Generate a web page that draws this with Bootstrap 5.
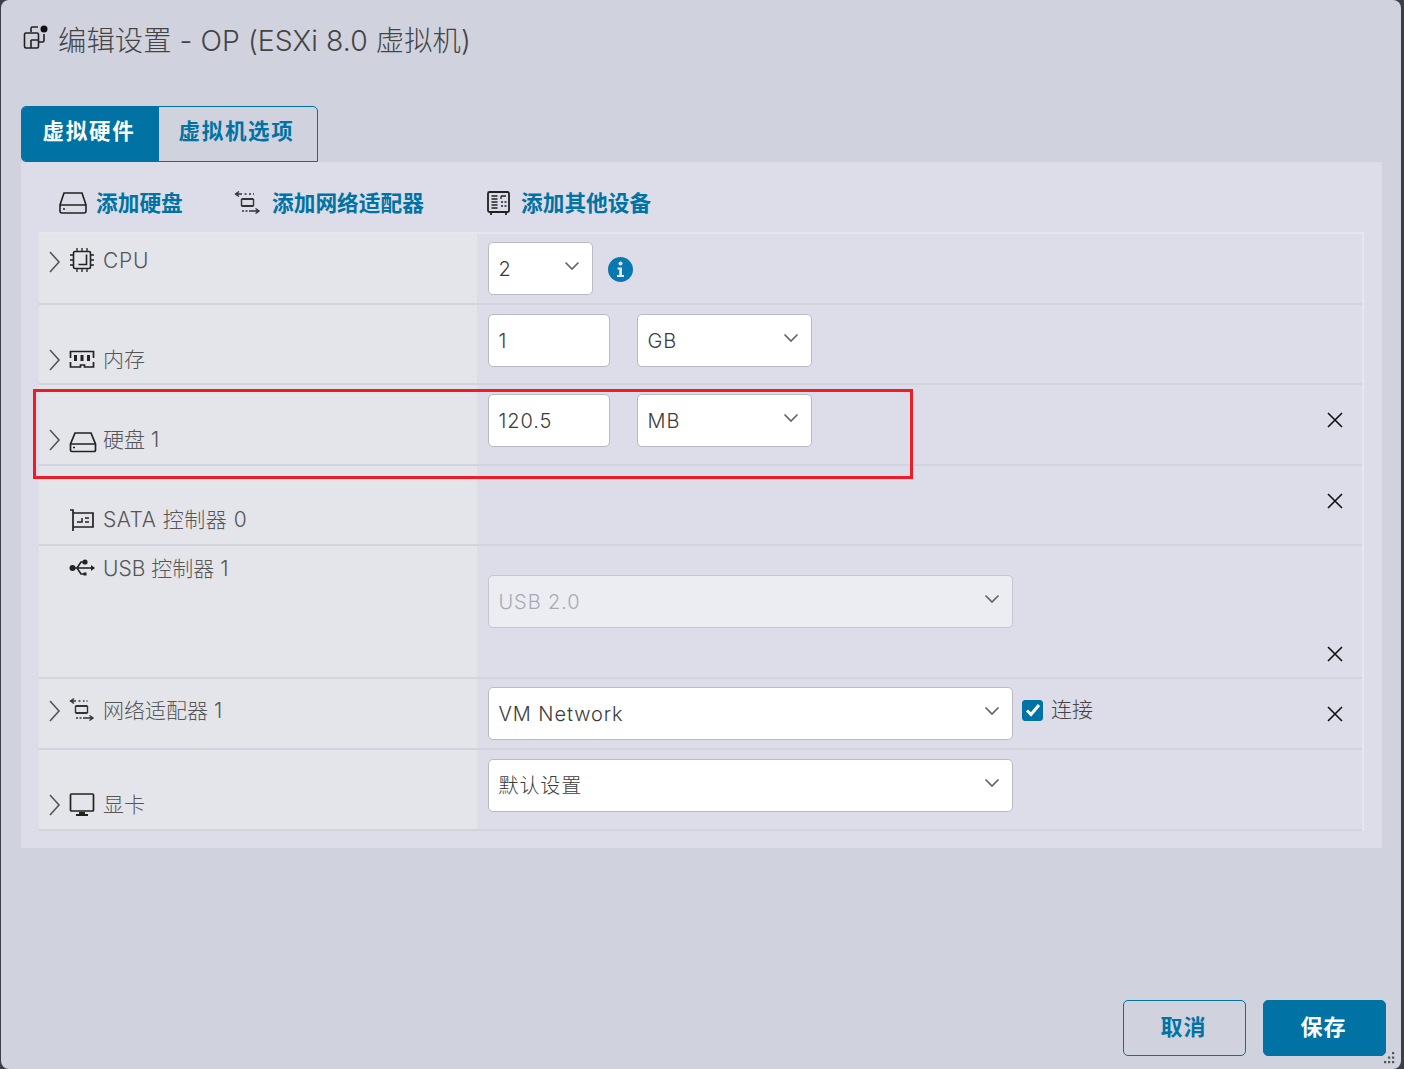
<!DOCTYPE html>
<html lang="zh-CN">
<head>
<meta charset="UTF-8">
<meta name="viewport" content="width=device-width, initial-scale=1.0">
<title>编辑设置</title>
<link href="https://cdn.jsdelivr.net/npm/bootstrap@5.3.0/dist/css/bootstrap.min.css" rel="stylesheet">
<style>
html, body { height: 100%; }
body {
    background: #3b3e47;
    overflow: hidden;
    font-family: "Inter", "Noto Sans CJK SC", sans-serif;
    color: #565656;
}
.dlg {
    position: relative;
    width: 1400px;
    height: 1069px;
    margin-left: 1px;
    background: #d0d2de;
    border-radius: 8px;
    display: flex;
    flex-direction: column;
}
.dlg-head {
    height: 106px;
    padding: 20px 0 0 22px;
    display: flex;
    align-items: flex-start;
    gap: 9px;
}
.dlg-title {
    font-size: 28.300px;
    line-height: 42px;
    font-weight: 300;
    color: #444;
    letter-spacing: .08px;
}
.tabs-box {
    margin-left: 20px;
    width: 297px;
    height: 56px;
    display: flex;
    border: 1px solid #0072a3;
    border-radius: 5px 5px 0 5px;
    overflow: hidden;
}
.tab-item {
    font-size: 21.500px;
    font-weight: 700;
    letter-spacing: 1.700px;
    line-height: 48px;
    display: flex;
    align-items: flex-start;
    justify-content: center;
    color: #0072a3;
    flex: 1;
    padding-right: 3px;
}
.tab-item.on {
    flex: 0 0 137px;
    background: #0072a3;
    color: #fff;
}
.panel-box {
    margin-left: 20px;
    width: 1361px;
    height: 686px;
    background: #dcdde8;
    padding: 0 18px;
}
.tool-bar {
    height: 70px;
    display: flex;
    align-items: center;
    font-size: 21.700px;
    font-weight: 700;
    color: #0072a3;
    padding-top: 13px;
}
.tool-item { display: flex; align-items: center; gap: 8px; }
.tool-item svg { display: block; }
.t1 { width: 195px; padding-left: 19px; }
.t2 { width: 252px; gap: 10px; }
.t3 { gap: 9px; }
.hw-list { border-top: 2px solid #e6e7ee; border-right: 2px solid #e6e7ee; }
.hw-row {
    display: flex;
    border-bottom: 2px solid #d2d3de;
}
.rh-71 { height: 71px; }
.rh-80 { height: 80px; }
.rh-81 { height: 81px; }
.rh-133 { height: 133px; }
.hw-left {
    flex: 0 0 438px;
    background: #e4e5eb;
    display: flex;
    gap: 8px;
    font-size: 21px;
    line-height: 28px;
    font-weight: 300;
    color: #565656;
    padding-left: 9px;
}
.left-top { align-items: flex-start; padding-top: 13px; }
.left-usb { align-items: flex-start; padding-top: 9px; }
.left-net { align-items: flex-start; padding-top: 18px; }
.left-low { align-items: flex-end; padding-bottom: 10px; }
.left-mem { align-items: flex-end; padding-bottom: 9px; }
.wide-a { letter-spacing: .7px; }
.wide-b { letter-spacing: .5px; }
.hw-right {
    flex: 1;
    display: flex;
    padding-left: 11px;
    position: relative;
}
.pt-8 { padding-top: 8px; }
.pt-9 { padding-top: 9px; }
.pt-29 { padding-top: 29px; }
.chev { width: 14px; flex: none; display: block; }
.chev-t { margin-top: 3px; }
.chev-b { margin-bottom: 3px; }
.no-chev { width: 14px; flex: none; }
.hw-ico { width: 26px; height: 26px; flex: none; display: block; margin-left: -1px; }
.ico-up1 { margin-bottom: 1px; }
.ico-up2 { margin-bottom: 2px; }
.ico-disk { width: 28px; margin-right: -2px; }
.fld {
    height: 53px;
    border: 1px solid #b9bac2;
    border-radius: 5px;
    font-size: 20px;
    font-weight: 300;
    letter-spacing: .9px;
    color: #3c3c3c;
    padding: 0 9px 0 9.500px;
    box-shadow: none;
    font-family: "Inter", "Noto Sans CJK SC", sans-serif;
}
.form-select.fld {
    background-image: url("data:image/svg+xml,%3csvg xmlns='http://www.w3.org/2000/svg' viewBox='0 0 16 10'%3e%3cpath fill='none' stroke='%23666' stroke-width='1.700' d='M1.500 1.500 8 8l6.500-6.500'/%3e%3c/svg%3e");
    background-position: right 12px top 18px;
    background-size: 16px 10px;
}
.form-select.fld:disabled { background-color: #ecedf2; color: #a8aab2; border-color: #c5c6ce; }
.w-105 { width: 105px; }
.w-122 { width: 122px; }
.w-175 { width: 175px; }
.w-525 { width: 525px; }
.unit-gap { margin-left: 27px; }
.x-btn {
    position: absolute;
    right: 18px;
    width: 18px;
    height: 18px;
    display: block;
}
.x-26 { top: 26px; }
.x-99 { top: 99px; }
.info-ico { display: block; margin: 15px 0 0 15px; }
.conn-wrap { display: flex; align-items: center; gap: 8px; margin: 0 0 0 9px; height: 46px; font-size: 21px; font-weight: 300; color: #444; }
.conn-wrap .form-check-input {
    width: 21px;
    height: 21px;
    margin: 0;
    background-color: #0072a3;
    border-color: #0072a3;
    border-radius: 3px;
    background-size: 16px 14px;
    background-image: url("data:image/svg+xml,%3csvg xmlns='http://www.w3.org/2000/svg' viewBox='0 0 16 14'%3e%3cpath fill='none' stroke='%23fff' stroke-width='3' d='M2 7.500 6 11.500 14 2'/%3e%3c/svg%3e");
}
.dlg-foot {
    margin-top: auto;
    padding: 0 15px 13px 0;
    display: flex;
    justify-content: flex-end;
    gap: 17px;
}
.foot-btn {
    width: 123px;
    height: 56px;
    font-size: 22px;
    font-weight: 700;
    letter-spacing: 1px;
    border-radius: 5px;
    border: 1px solid #0072a3;
    color: #0072a3;
    background: transparent;
    padding: 0 6px 1px 4px;
}
.foot-btn.main { background: #0072a3; color: #fff; }
.red-mark {
    position: absolute;
    left: 32px;
    top: 389px;
    width: 880px;
    height: 90px;
    border: 3px solid #ee1c25;
    pointer-events: none;
}
.grip { position: absolute; right: 6px; bottom: 5px; display: block; }
</style>
</head>
<body>
<div class="dlg">
    <div class="dlg-head">
        <svg width="26" height="28" viewBox="0 0 26 28" fill="none" stroke="#222" stroke-width="1.600" class="mt-1">
            <path d="M8 8V4.500A1.500 1.500 0 0 1 9.500 3H15M21 10v6.500a1.500 1.500 0 0 1-1.500 1.500H16"/>
            <rect x="1.500" y="9" width="14" height="15" rx="1.500"/>
            <path d="M8 16h7.500M8 16v8"/>
            <circle cx="21" cy="5" r="3.500" fill="#111" stroke="none"/>
        </svg>
        <div class="dlg-title">编辑设置 - OP (ESXi 8.0 虚拟机)</div>
    </div>

    <div class="tabs-box">
        <div class="tab-item on">虚拟硬件</div>
        <div class="tab-item">虚拟机选项</div>
    </div>

    <div class="panel-box">
        <div class="tool-bar">
            <div class="tool-item t1">
                <svg width="30" height="24" viewBox="0 0 30 24" fill="none" stroke="#222" stroke-width="1.600">
                    <path d="M6 2h18l4 12v6a2 2 0 0 1-2 2H4a2 2 0 0 1-2-2v-6z"/>
                    <path d="M2 14h26M5 18h2"/>
                </svg>
                添加硬盘
            </div>
            <div class="tool-item t2">
                <svg width="28" height="26" viewBox="0 0 28 26" fill="none" stroke="#333" stroke-width="1.400">
                    <path d="M5 1.500 1.500 4 5 6.500M2 4h6M10.500 4h2M15 4h2M19 4h1"/>
                    <path d="M7.500 9h12M7.500 16h12" stroke-width="2"/>
                    <path d="M7.500 9v7M19.500 9v7"/>
                    <path d="M21.500 18.500 25 21l-3.500 2.500M25 21H15M8 21h2M11.500 21h2"/>
                </svg>
                添加网络适配器
            </div>
            <div class="tool-item t3">
                <svg width="26" height="26" viewBox="0 0 26 26" fill="none" stroke="#222" stroke-width="1.800">
                    <rect x="2" y="2" width="21" height="20" rx="1.500"/>
                    <path d="M5 25v-3M20 25v-3"/>
                    <path d="M5.500 6h6M5.500 9h6M5.500 12h6M5.500 15h6M5.500 18h6M15 6h5M15 6v3" stroke-width="1.300"/>
                    <path d="M15 12h2M18.500 12h2M15 16h2M18.500 16h2" stroke-width="1.600"/>
                </svg>
                添加其他设备
            </div>
        </div>

        <div class="hw-list">
            <!-- CPU -->
            <div class="hw-row rh-71">
                <div class="hw-left left-top">
                    <svg class="chev mt-1" height="22" viewBox="0 0 14 22" fill="none" stroke="#555" stroke-width="1.600"><path d="M2 1l9 10-9 10"/></svg>
                    <svg class="hw-ico" viewBox="0 0 26 26" fill="none" stroke="#222" stroke-width="1.600">
                        <rect x="4.500" y="4.500" width="17" height="17" rx="1.500"/>
                        <path d="M17.500 7.500v10h-8"/>
                        <path d="M8 1v3M13 1v3M18 1v3M8 22v3M13 22v3M18 22v3M1 8h3M1 13h3M1 18h3M22 8h3M22 13h3M22 18h3" stroke-width="1.300"/>
                    </svg>
                    <span class="wide-a">CPU</span>
                </div>
                <div class="hw-right pt-8">
                    <select class="form-select fld w-105"><option>2</option></select>
                    <svg class="info-ico" width="25" height="25" viewBox="0 0 25 25">
                        <circle cx="12.500" cy="12.500" r="12.500" fill="#0a78b0"/>
                        <circle cx="12.500" cy="6.500" r="2" fill="#e6e7ee"/>
                        <path d="M9.500 10.500h4.500v7.500h2v2H9v-2h2.200v-5.500H9.500z" fill="#e6e7ee"/>
                    </svg>
                </div>
            </div>
            <!-- memory -->
            <div class="hw-row rh-80">
                <div class="hw-left left-mem">
                    <svg class="chev chev-b" height="22" viewBox="0 0 14 22" fill="none" stroke="#555" stroke-width="1.600"><path d="M2 1l9 10-9 10"/></svg>
                    <svg class="hw-ico ico-up2" viewBox="0 0 26 26" fill="none" stroke="#222" stroke-width="1.700">
                        <path d="M1.500 12V5.500h23V12M24.500 16v5H15.500v-2h-4v2H1.500v-5"/>
                        <path d="M6.500 9v6M13 9v6M19.500 9v6" stroke-width="3"/>
                    </svg>
                    <span>内存</span>
                </div>
                <div class="hw-right pt-9">
                    <input class="form-control fld w-122" value="1">
                    <select class="form-select fld w-175 unit-gap"><option>GB</option></select>
                </div>
            </div>
            <!-- disk -->
            <div class="hw-row rh-81">
                <div class="hw-left left-low">
                    <svg class="chev chev-b" height="22" viewBox="0 0 14 22" fill="none" stroke="#555" stroke-width="1.600"><path d="M2 1l9 10-9 10"/></svg>
                    <svg class="hw-ico ico-disk" viewBox="0 0 28 26" fill="none" stroke="#222" stroke-width="1.700">
                        <path d="M6 5h16l4.500 11v6a1.500 1.500 0 0 1-1.500 1.500H3A1.500 1.500 0 0 1 1.500 22v-6z"/>
                        <path d="M2 16h24M4 19.500h2"/>
                    </svg>
                    <span>硬盘 1</span>
                </div>
                <div class="hw-right pt-9">
                    <input class="form-control fld w-122" value="120.5">
                    <select class="form-select fld w-175 unit-gap"><option>MB</option></select>
                    <svg class="x-btn x-26" viewBox="0 0 18 18" stroke="#111" stroke-width="1.600"><path d="M2 2l14 14M16 2 2 16"/></svg>
                </div>
            </div>
            <!-- sata -->
            <div class="hw-row rh-80">
                <div class="hw-left left-low">
                    <span class="no-chev"></span>
                    <svg class="hw-ico ico-up1" viewBox="0 0 26 26" fill="none" stroke="#222" stroke-width="1.700">
                        <path d="M1 3h3v21M4 6h20v14H4"/>
                        <path d="M8 15h5v-4M16 11h4M16 15h4" stroke-width="1.500"/>
                    </svg>
                    <span class="wide-b">SATA 控制器 0</span>
                </div>
                <div class="hw-right">
                    <svg class="x-btn x-26" viewBox="0 0 18 18" stroke="#111" stroke-width="1.600"><path d="M2 2l14 14M16 2 2 16"/></svg>
                </div>
            </div>
            <!-- usb -->
            <div class="hw-row rh-133">
                <div class="hw-left left-usb">
                    <span class="no-chev"></span>
                    <svg class="hw-ico" viewBox="0 0 26 26" fill="#222" stroke="#222" stroke-width="1.600">
                        <circle cx="3.500" cy="13" r="2.200"/>
                        <path d="M4 13h18"/>
                        <path d="M22 10l4 3-4 3z" stroke="none"/>
                        <path d="M8 13l4-6h3M8 13l4 6h3" fill="none"/>
                        <circle cx="16" cy="7" r="1.800"/>
                        <rect x="14.500" y="17.500" width="3" height="3" stroke="none"/>
                    </svg>
                    <span>USB 控制器 1</span>
                </div>
                <div class="hw-right pt-29">
                    <select class="form-select fld w-525" disabled><option>USB 2.0</option></select>
                    <svg class="x-btn x-99" viewBox="0 0 18 18" stroke="#111" stroke-width="1.600"><path d="M2 2l14 14M16 2 2 16"/></svg>
                </div>
            </div>
            <!-- network -->
            <div class="hw-row rh-71">
                <div class="hw-left left-net">
                    <svg class="chev chev-t" height="22" viewBox="0 0 14 22" fill="none" stroke="#555" stroke-width="1.600"><path d="M2 1l9 10-9 10"/></svg>
                    <svg class="hw-ico" viewBox="0 0 26 26" fill="none" stroke="#333" stroke-width="1.400">
                        <path d="M5 1.500 1.500 4 5 6.500M2 4h5M9.500 4h2M14 4h1.500M17.500 4h1"/>
                        <path d="M6.500 9h12M6.500 16h12" stroke-width="2"/>
                        <path d="M6.500 9v7M18.500 9v7"/>
                        <path d="M20.500 18.500 24 21l-3.500 2.500M24 21H14M7 21h2M10.500 21h2"/>
                    </svg>
                    <span>网络适配器 1</span>
                </div>
                <div class="hw-right pt-8">
                    <select class="form-select fld w-525"><option>VM Network</option></select>
                    <label class="conn-wrap"><input class="form-check-input" type="checkbox" checked>连接</label>
                    <svg class="x-btn x-26" viewBox="0 0 18 18" stroke="#111" stroke-width="1.600"><path d="M2 2l14 14M16 2 2 16"/></svg>
                </div>
            </div>
            <!-- video -->
            <div class="hw-row rh-81">
                <div class="hw-left left-low">
                    <svg class="chev chev-b" height="22" viewBox="0 0 14 22" fill="none" stroke="#555" stroke-width="1.600"><path d="M2 1l9 10-9 10"/></svg>
                    <svg class="hw-ico ico-up1" viewBox="0 0 26 26" fill="none" stroke="#222" stroke-width="1.700">
                        <rect x="1.500" y="2" width="23" height="17" rx="1"/>
                        <path d="M10 20h6v2h3v2H7v-2h3z" fill="#222" stroke="none"/>
                    </svg>
                    <span>显卡</span>
                </div>
                <div class="hw-right pt-9">
                    <select class="form-select fld w-525"><option>默认设置</option></select>
                </div>
            </div>
        </div>
    </div>

    <div class="dlg-foot">
        <button type="button" class="btn foot-btn">取消</button>
        <button type="button" class="btn foot-btn main">保存</button>
    </div>

    <svg class="grip" width="12" height="12" viewBox="0 0 12 12" fill="#555">
        <rect x="9" y="0" width="2.200" height="2.200"/><rect x="5" y="4.500" width="2.200" height="2.200"/><rect x="9" y="4.500" width="2.200" height="2.200"/>
        <rect x="1" y="9" width="2.200" height="2.200"/><rect x="5" y="9" width="2.200" height="2.200"/><rect x="9" y="9" width="2.200" height="2.200"/>
    </svg>

    <div class="red-mark"></div>
</div>
<script src="https://cdn.jsdelivr.net/npm/bootstrap@5.3.0/dist/js/bootstrap.bundle.min.js"></script>
</body>
</html>
